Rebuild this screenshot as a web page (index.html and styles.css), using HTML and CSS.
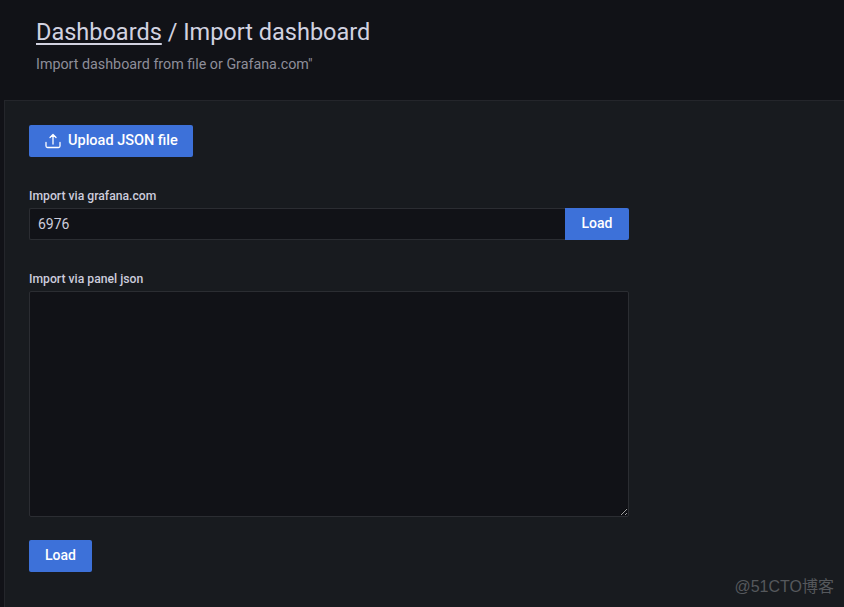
FILE: index.html
```html
<!DOCTYPE html>
<html lang="en">
<head>
    <meta charset="UTF-8">
    <title>Import dashboard</title>
    <link rel="stylesheet" href="styles.css">
</head>
<body>
    <header class="page-header">
        <h1 class="page-title"><a href="#">Dashboards</a> / Import dashboard</h1>
        <div class="page-sub">Import dashboard from file or Grafana.com"</div>
    </header>
    <main class="page-body">
        <button class="btn btn-upload">
            <svg class="icon" width="16" height="16" viewBox="0 0 16 16" fill="none" stroke="currentColor" stroke-width="1.3" stroke-linecap="round" stroke-linejoin="round">
                <path d="M1 9.5V13a1.5 1.5 0 0 0 1.5 1.5h11A1.5 1.5 0 0 0 15 13V9.5"/>
                <path d="M8 11V1.5M5 4.5l3-3 3 3"/>
            </svg>
            Upload JSON file
        </button>
        <label class="field-label label-com" for="comId">Import via grafana.com</label>
        <div class="input-row">
            <input class="text-input" id="comId" type="text" value="6976">
            <button class="btn btn-addon">Load</button>
        </div>
        <label class="field-label label-json" for="panelJson">Import via panel json</label>
        <textarea class="json-input" id="panelJson"></textarea>
        <button class="btn btn-load">Load</button>
    </main>
    <div class="watermark">@51CTO博客</div>
</body>
</html>
```

FILE: styles.css
```css
html, body { height: 100%; }
body {
    margin: 0;
    background: #111217;
    font-family: Roboto, "Noto Sans CJK SC", sans-serif;
    color: #ccccdc;
    overflow: hidden;
    display: flex;
    flex-direction: column;
}
.page-header {
    height: 100px;
    padding: 16px 0 0 36px;
    box-sizing: border-box;
    flex: none;
}
.page-title {
    margin: 0;
    font-size: 23.5px;
    font-weight: 400;
    line-height: 32px;
    color: #d2d2e0;
}
.page-title a {
    color: inherit;
    text-decoration: underline;
    text-underline-offset: 3px;
}
.page-sub {
    margin-top: 8px;
    font-size: 14.3px;
    line-height: 16px;
    color: #8e8e9a;
}
.page-body {
    flex: 1;
    margin-left: 4px;
    padding: 24px 0 0 24px;
    background: #181b1f;
    border-top: 1px solid #24262b;
    border-left: 1px solid #24262b;
    display: flex;
    flex-direction: column;
    align-items: flex-start;
}
.btn {
    height: 32px;
    border: 0;
    border-radius: 2px;
    background: #3d71d9;
    color: #fff;
    font-family: inherit;
    font-size: 14px;
    font-weight: 500;
    padding: 0 16px 2px;
    white-space: nowrap;
}
.btn-upload {
    display: flex;
    align-items: center;
    gap: 7px;
    width: 164px;
    flex: none;
    font-size: 14.5px;
}
.icon { flex: none; margin-top: 2px; }
.field-label {
    font-size: 12.2px;
    font-weight: 500;
    line-height: 16px;
    color: #ccccdc;
}
.label-com { margin-top: 31px; }
.label-json { margin-top: 31px; }
.input-row {
    display: flex;
    width: 600px;
    margin-top: 4px;
}
.text-input {
    flex: 1;
    min-width: 0;
    height: 32px;
    box-sizing: border-box;
    background: #111217;
    border: 1px solid #2b2d32;
    border-right: 0;
    border-radius: 2px 0 0 2px;
    color: #ccccdc;
    font-family: inherit;
    font-size: 14px;
    padding: 0 8px;
    outline: none;
}
.btn-addon {
    width: 64px;
    border-radius: 0 2px 2px 0;
}
.json-input {
    display: block;
    width: 600px;
    height: 226px;
    margin: 4px 0 0;
    box-sizing: border-box;
    background: #111217;
    border: 1px solid #2b2d32;
    border-radius: 2px;
    outline: none;
}
.btn-load {
    width: 63px;
    margin-top: 23px;
}
.watermark {
    position: absolute;
    right: 10px;
    bottom: 11px;
    font-family: "Liberation Sans", "Noto Sans CJK SC", sans-serif;
    font-size: 16px;
    line-height: 18px;
    color: #55585c;
}
```
